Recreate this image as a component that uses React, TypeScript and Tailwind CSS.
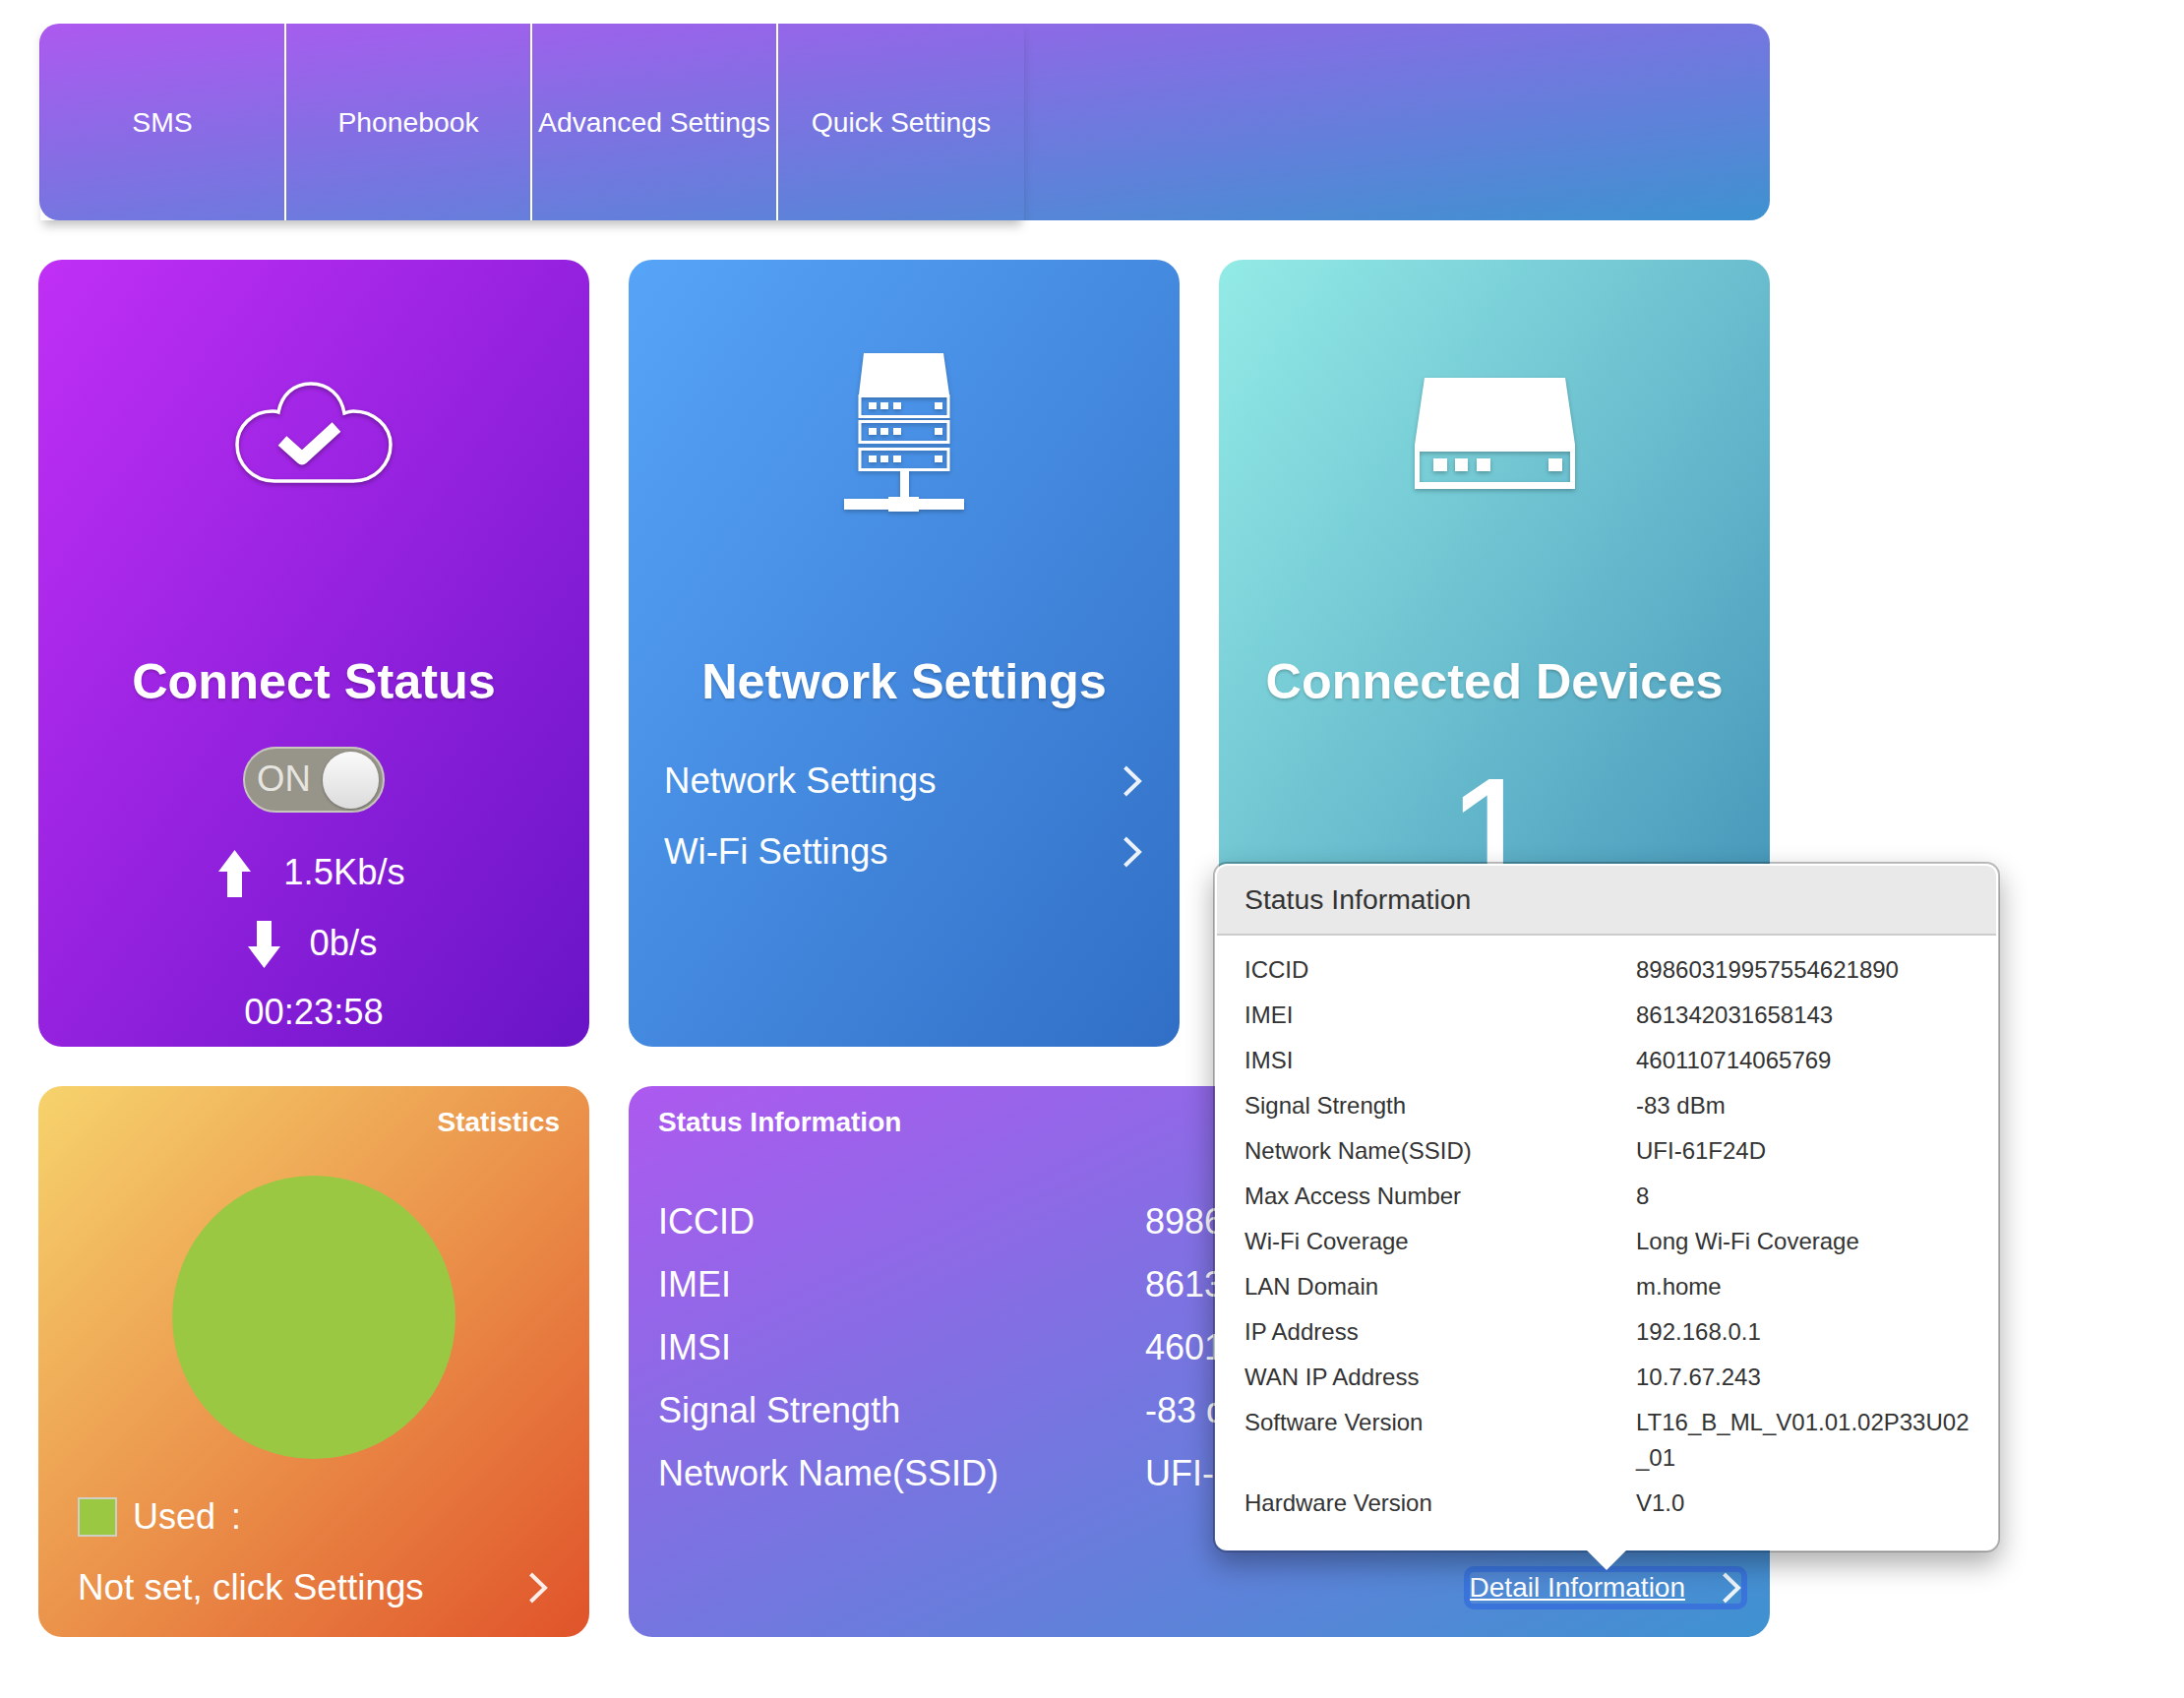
const font = "font-['Liberation_Sans',Arial,sans-serif]";

const navItems = ['SMS', 'Phonebook', 'Advanced Settings', 'Quick Settings'];

const statusRows: [string, string][] = [
  ['ICCID', '89860319957554621890'],
  ['IMEI', '861342031658143'],
  ['IMSI', '460110714065769'],
  ['Signal Strength', '-83 dBm'],
  ['Network Name(SSID)', 'UFI-61F24D'],
  ['Max Access Number', '8'],
  ['Wi-Fi Coverage', 'Long Wi-Fi Coverage'],
  ['LAN Domain', 'm.home'],
  ['IP Address', '192.168.0.1'],
  ['WAN IP Address', '10.7.67.243'],
  ['Software Version', 'LT16_B_ML_V01.01.02P33U02\u200b_01'],
  ['Hardware Version', 'V1.0'],
];

function Chevron() {
  return (
    <svg width="20" height="32" viewBox="0 0 20 32" fill="none" className="shrink-0">
      <path d="M2.5 2 L17 16 L2.5 30" stroke="#fff" strokeOpacity="0.9" strokeWidth="4" />
    </svg>
  );
}

function CloudIcon() {
  return (
    <svg width="160" height="104" viewBox="0 0 160 104" className="drop-shadow-[0_2px_2px_rgba(0,0,0,0.35)]">
      <path
        d="M40 101 C18 101 2 84 2 64 C2 45 18 30 38 30 C40 30 42 30 44 31 C47 14 59 2 77 2 C95 2 108 14 111 32 C114 31 117 30 120 30 C141 30 158 45 158 64 C158 84 142 101 120 101 Z"
        fill="none"
        stroke="#fff"
        strokeWidth="3.5"
      />
      <path d="M48 60 L68 78 L103 46" fill="none" stroke="#fff" strokeWidth="13" strokeLinejoin="round" />
    </svg>
  );
}

function ServerIcon() {
  const units = [42, 68, 96];
  return (
    <svg width="122" height="162" viewBox="0 0 122 162" className="drop-shadow-[0_2px_2px_rgba(0,0,0,0.25)]">
      <path d="M20 0 H101 L107 42 H15 Z" fill="#fff" />
      {units.map((y) => (
        <g key={y} fill="#fff">
          <rect x="16" y={y + 1.5} width="90" height="21" fill="none" stroke="#fff" strokeWidth="3" />
          <rect x="25" y={y + 8} width="8" height="7" />
          <rect x="37" y={y + 8} width="8" height="7" />
          <rect x="50" y={y + 8} width="8" height="7" />
          <rect x="92" y={y + 8} width="8" height="7" />
        </g>
      ))}
      <rect x="57" y="119" width="9" height="30" fill="#fff" />
      <rect x="0" y="148" width="122" height="11" fill="#fff" />
      <rect x="45" y="146" width="31" height="15" fill="#fff" />
    </svg>
  );
}

function DeviceIcon() {
  return (
    <svg width="163" height="113" viewBox="0 0 163 113" className="drop-shadow-[0_2px_2px_rgba(0,0,0,0.25)]">
      <path fillRule="evenodd" fill="#fff" d="M10 0 H153 L163 68 V113 H0 V68 Z M5 75 V106 H158 V75 Z" />
      <rect x="19" y="82" width="14" height="13" fill="#fff" />
      <rect x="41" y="82" width="13" height="13" fill="#fff" />
      <rect x="63" y="82" width="14" height="13" fill="#fff" />
      <rect x="136" y="82" width="14" height="13" fill="#fff" />
    </svg>
  );
}

function RateArrow({ down }: { down?: boolean }) {
  return (
    <svg width="33" height="48" viewBox="0 0 33 48" className={down ? 'rotate-180' : ''}>
      <path d="M16.5 0 L33 22 H24 V48 H9 V22 H0 Z" fill="#fff" />
    </svg>
  );
}

function IconArea({ children }: { children: React.ReactNode }) {
  return <div className="h-[352px] shrink-0 flex items-center justify-center">{children}</div>;
}

function CardTitle({ children }: { children: React.ReactNode }) {
  return (
    <h2 className="mt-10 h-[72px] leading-[74px] text-[50.4px] font-bold text-center text-white [text-shadow:0_2px_3px_rgba(0,0,0,0.2)]">
      {children}
    </h2>
  );
}

export default function App() {
  return (
    <div className={`${font} relative min-h-[1726px] w-[2220px] bg-white pt-6 pl-[39px]`}>
      <nav className="ml-[1px] w-[1759px] h-[200px] rounded-[20px] bg-[linear-gradient(to_bottom_right,#ad59ef,#3e92d0)] text-white">
        <ul className="flex ml-[1px] w-[1000px] h-full shadow-[0_8px_10px_-3px_rgba(0,0,0,0.25)]">
          {navItems.map((item, i) => (
            <li
              key={item}
              className={`w-[250px] flex items-center justify-center text-[28.3px] whitespace-nowrap ${i < 3 ? 'border-r-2 border-white' : ''}`}
            >
              {item}
            </li>
          ))}
        </ul>
      </nav>

      <div className="mt-10 w-[1760px] grid grid-cols-3 gap-10 text-white">
        {/* Connect status */}
        <section className="h-[800px] rounded-[24px] bg-[linear-gradient(to_bottom_right,#c02ff5,#6814c7)] flex flex-col items-center">
          <IconArea>
            <CloudIcon />
          </IconArea>
          <CardTitle>Connect Status</CardTitle>
          <div className="mt-[31px] w-[144px] h-[70px] rounded-full bg-[#97948a] border-2 border-[#c8c7bd] flex items-center pl-3 justify-between pr-1">
            <span className="text-[36.5px] text-[#e6e5df] leading-none">ON</span>
            <span className="w-[57px] h-[58px] rounded-full bg-[linear-gradient(to_bottom,#fafafa,#dcdcdc)] shadow-[0_1px_3px_rgba(0,0,0,0.3)]" />
          </div>
          <div className="mt-[26px] h-[73px] -ml-[4px] flex items-center gap-[33px] text-[36.4px]">
            <RateArrow />
            <span>1.5Kb/s</span>
          </div>
          <div className="mt-[2px] h-[73px] -ml-[3px] flex items-center gap-[30px] text-[36.4px]">
            <RateArrow down />
            <span>0b/s</span>
          </div>
          <div className="h-[72px] flex items-center text-[36.4px]">00:23:58</div>
        </section>

        {/* Network settings */}
        <section className="h-[800px] rounded-[24px] bg-[linear-gradient(to_bottom_right,#56a4f8,#316fc6)] flex flex-col">
          <IconArea>
            <ServerIcon />
          </IconArea>
          <CardTitle>Network Settings</CardTitle>
          <div className="mt-[30px] pl-9 pr-[38px] text-[36.6px]">
            <div className="h-[72px] flex items-center justify-between">
              <span>Network Settings</span>
              <Chevron />
            </div>
            <div className="h-[72px] flex items-center justify-between">
              <span>Wi-Fi Settings</span>
              <Chevron />
            </div>
          </div>
        </section>

        {/* Connected devices */}
        <section className="h-[800px] rounded-[24px] overflow-hidden bg-[linear-gradient(to_bottom_right,#93ebe6,#3f8fb6)] flex flex-col items-center">
          <IconArea>
            <DeviceIcon />
          </IconArea>
          <CardTitle>Connected Devices</CardTitle>
          <div className="mt-10 text-[160px] leading-[160px] -ml-[4px] [-webkit-text-stroke:2px_white]">1</div>
        </section>

        {/* Statistics */}
        <section className="h-[560px] rounded-[24px] bg-[linear-gradient(to_bottom_right,#f6d36c,#e0532a)] flex flex-col px-10 pt-4">
          <div className="h-10 leading-[42px] -mr-[10px] text-right text-[28px] font-bold">Statistics</div>
          <div className="mt-[35px] w-[288px] h-[288px] rounded-full bg-[#9bc843] self-center" />
          <div className="mt-[39px] h-10 flex items-center gap-4 text-[36px]">
            <span className="w-10 h-10 bg-[#9bc843] border-2 border-[#cfcfc4]" />
            <span>Used</span>
            <span>:</span>
          </div>
          <div className="mt-[32px] h-10 flex items-center justify-between text-[36.8px] pr-[2px]">
            <span>Not set, click Settings</span>
            <Chevron />
          </div>
        </section>

        {/* Status information */}
        <section className="col-span-2 relative h-[560px] rounded-[24px] overflow-hidden bg-[linear-gradient(to_bottom_right,#ad59ef,#3e92d0)] flex flex-col pl-[30px] pt-4">
          <div className="h-10 leading-[42px] text-[28px] font-bold">Status Information</div>
          <div className="mt-[50px] text-[36px]">
            {statusRows.slice(0, 5).map(([label, value]) => (
              <div key={label} className="h-16 flex items-center">
                <span className="w-[495px]">{label}</span>
                <span>{value}</span>
              </div>
            ))}
          </div>
          <a
            href="#"
            className="mt-auto mb-[34px] mr-[29px] self-end flex items-center gap-[37px] h-8 text-[28px] text-white rounded-sm outline-[6px] outline-solid outline-[#3a74db]"
          >
            <span className="underline underline-offset-2">Detail Information</span>
            <Chevron />
          </a>
        </section>
      </div>

      {/* Popover opened from Detail Information */}
      <div className="absolute left-[1233px] top-[876px] w-[800px] rounded-[14px] border-2 border-black/25 bg-white bg-clip-padding text-[#333] shadow-[0_12px_28px_rgba(0,0,0,0.32)]">
        <div className="m-[2px] mb-0 h-[71px] pl-7 flex items-center text-[28.4px] bg-[#e9e9e9] border-b-2 border-[#cccccc] rounded-t-[10px]">
          Status Information
        </div>
        <div className="pl-[30px] pt-[12px] pb-[25px] text-[24px] leading-[36px]">
          {statusRows.map(([label, value]) => (
            <div key={label} className="py-[5px] grid grid-cols-[398px_345px]">
              <div>{label}</div>
              <div>{value}</div>
            </div>
          ))}
        </div>
        <div className="absolute left-1/2 -ml-5 top-full w-0 h-0 border-x-[20px] border-x-transparent border-t-[20px] border-t-white" />
      </div>
    </div>
  );
}
